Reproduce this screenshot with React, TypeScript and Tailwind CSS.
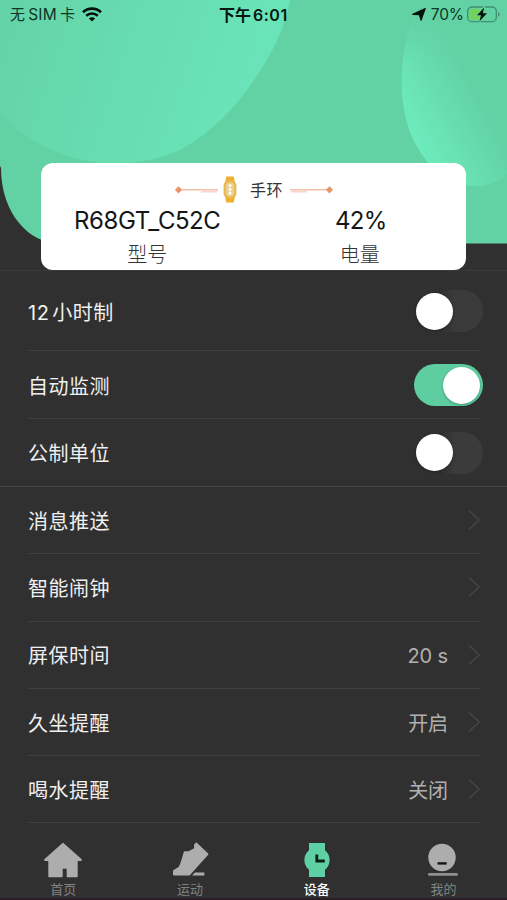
import { ReactNode, useState } from "react";

interface SwitchItem {
    id: number;
    label: ReactNode;
    on: boolean;
}

interface LinkItem {
    label: string;
    value?: string;
}

const links: LinkItem[] = [
    { label: "消息推送" },
    { label: "智能闹钟" },
    { label: "屏保时间", value: "20 s" },
    { label: "久坐提醒", value: "开启" },
    { label: "喝水提醒", value: "关闭" },
];

function StatusBar() {
    return (
        <div className="relative flex h-[30px] items-center justify-between pl-[10px] pr-[7px] text-[15px] text-[#0d3527]">
            <div className="flex items-center">
                <span className="tracking-[0.2px]">无<span className="mx-[3px] text-[15.5px]">SIM</span>卡</span>
                <svg className="mb-px ml-[7px]" width="20" height="15" viewBox="0 0 20 15">
                    <path d="M1 5.2A13 13 0 0 1 19 5.2" fill="none" stroke="#04120c" strokeWidth="2.6" />
                    <path d="M4.2 8.8A8.4 8.4 0 0 1 15.8 8.8" fill="none" stroke="#04120c" strokeWidth="2.6" />
                    <path d="M10 14.6L6.9 11.5A4.4 4.4 0 0 1 13.1 11.5Z" fill="#04120c" />
                </svg>
            </div>
            <div className="absolute left-[219px] top-[4px] text-[16px] font-semibold leading-[22px] whitespace-nowrap text-[#06170f]">
                下午<span className="ml-[2px] tracking-[0.5px]">6:01</span>
            </div>
            <div className="flex items-center">
                <svg className="mb-[2px]" width="14" height="13" viewBox="0 0 14 13">
                    <path d="M13.2 0.6L9 12.2L7.4 6.6L0.8 6.4Z" fill="#04120c" stroke="#04120c" strokeWidth="1.2" strokeLinejoin="round" />
                </svg>
                <span className="ml-[5px] text-[15.5px] tracking-[-0.1px]">70%</span>
                <svg className="mb-px ml-[3px]" width="33" height="17" viewBox="0 0 33 17">
                    <rect x="0.7" y="1" width="28.6" height="14.6" rx="4.2" fill="none" stroke="#3f8f70" strokeWidth="1.3" />
                    <rect x="2.6" y="3" width="16.4" height="10.6" rx="2.4" fill="#72d457" />
                    <path d="M31 6v5c2-1 2-4 0-5Z" fill="#3f8f70" />
                    <path d="M17.2 1.4L10 9.2H14L12.4 15.6L20 7.2H15.8Z" fill="#04120c" stroke="#62d2a5" strokeWidth="2" paintOrder="stroke" />
                </svg>
            </div>
        </div>
    );
}

function HeaderArt() {
    return (
        <svg className="absolute left-0 top-0" width="507" height="244" viewBox="0 0 507 244">
            <defs>
                <linearGradient id="bigCircle" x1="0" y1="40" x2="240" y2="120" gradientUnits="userSpaceOnUse">
                    <stop offset="0" stopColor="#64d4a8" />
                    <stop offset="1" stopColor="#69e4b8" />
                </linearGradient>
                <linearGradient id="sideBlob" x1="408" y1="138" x2="480" y2="100" gradientUnits="userSpaceOnUse">
                    <stop offset="0" stopColor="#6eedbe" />
                    <stop offset="1" stopColor="#62d2a5" />
                </linearGradient>
                <linearGradient id="sideBlobTop" x1="0" y1="10" x2="0" y2="60" gradientUnits="userSpaceOnUse">
                    <stop offset="0" stopColor="#62d2a5" />
                    <stop offset="1" stopColor="#62d2a5" stopOpacity="0" />
                </linearGradient>
            </defs>
            <path d="M0 0H507V243.5H60C30 244 1 214 1 168L0 166Z" fill="#62d2a5" />
            <path d="M0 0H290C285 28 272 54 254 80C235 108 212 132 182 149C142 168 92 168 52 150C31 140 14 129 0 113Z" fill="url(#bigCircle)" />
            <path d="M420 0C404 32 399 74 403 103C407 129 414 145 427 161C440 178 458 186 475 186C488 186 499 182 507 174V0Z" fill="url(#sideBlob)" />
            <path d="M398 0H507V60H398Z" fill="url(#sideBlobTop)" />
        </svg>
    );
}

function Ornament({ flip }: { flip?: boolean }) {
    return (
        <svg className={flip ? "-scale-x-100" : ""} width="43" height="8" viewBox="0 0 43 8">
            <path d="M3 3.8H43" stroke="#f3c0a9" strokeWidth="1.4" />
            <path d="M26 5.8H42" stroke="#f6cfc0" strokeWidth="1.3" />
            <path d="M3.5 0.4L6.9 3.8L3.5 7.2L0.1 3.8Z" fill="#e89468" stroke="#e89468" strokeWidth="0.4" />
        </svg>
    );
}

function DeviceCard() {
    return (
        <div className="mx-[41px] mt-[133px] h-[107px] rounded-[12px] bg-white">
            <div className="flex h-[54px] items-center pl-[134px]">
                <Ornament />
                <svg className="mb-[2px] ml-[5px]" width="14" height="27" viewBox="0 0 14 27">
                    <path d="M3.2 0.5H10.8L11.8 6H2.2Z" fill="#efb02e" />
                    <path d="M2.2 21H11.8L10.8 26.5H3.2Z" fill="#efb02e" />
                    <rect x="0.6" y="4.2" width="12.8" height="18.4" rx="5.2" fill="#edb849" />
                    <rect x="2.8" y="6.2" width="8.4" height="14.4" rx="4" fill="#e6cf98" />
                    <circle cx="7" cy="9.6" r="1.6" fill="#fff8e6" />
                    <circle cx="7" cy="13.4" r="1.6" fill="#fff8e6" />
                    <circle cx="7" cy="17.2" r="1.6" fill="#fff8e6" />
                </svg>
                <span className="ml-[13px] mr-[7px] text-[16px] leading-[24px] tracking-[0.4px] text-[#333]">手环</span>
                <Ornament flip />
            </div>
            <div className="-mt-[14px] grid grid-cols-2 text-center">
                <div>
                    <div className="text-[24px] leading-[36px] tracking-[-0.45px] text-[#161616]">R68GT_C52C</div>
                    <div className="pt-px text-[20px] font-light leading-[30px] text-[#333]">型号</div>
                </div>
                <div>
                    <div className="pl-[2px] text-[24px] leading-[36px] tracking-[-0.8px] text-[#161616]">42%</div>
                    <div className="pt-px text-[20px] font-light leading-[30px] text-[#333]">电量</div>
                </div>
            </div>
        </div>
    );
}

function Toggle({ on, onClick }: { on: boolean; onClick: () => void }) {
    return (
        <button
            onClick={onClick}
            className={`flex h-[42px] w-[69px] items-center rounded-full ${on ? "justify-end bg-[#5ecda0] pr-[3px]" : "justify-start bg-gradient-to-r from-[#303030] from-40% to-[#3b3b3b] to-60% pl-[2px]"}`}
        >
            <span className="size-[37px] rounded-full bg-white shadow-[0_1px_3px_rgba(0,0,0,0.25)]"></span>
        </button>
    );
}

function Tab({ label, active, children }: { label: string; active?: boolean; children: ReactNode }) {
    return (
        <div className="flex flex-1 flex-col items-center">
            <div className="flex h-[38px] items-center">{children}</div>
            <span className={`pt-px text-[13px] leading-[18px] ${active ? "font-medium text-white" : "text-[#828282]"}`}>{label}</span>
        </div>
    );
}

export default function App() {
    const [switches, setSwitches] = useState<SwitchItem[]>([
        { id: 1, label: <>12<span className="ml-[3px]">小时制</span></>, on: false },
        { id: 2, label: "自动监测", on: true },
        { id: 3, label: "公制单位", on: false },
    ]);

    const toggle = (id: number) => {
        setSwitches(switches.map((item) => (item.id === id ? { ...item, on: !item.on } : item)));
    };

    return (
        <div className="flex h-[900px] w-[507px] flex-col overflow-hidden bg-[#303030] font-['Inter','Noto_Sans_CJK_SC',sans-serif]">
            <header className="relative h-[271px] shrink-0 border-b border-[#3b3b3b]">
                <HeaderArt />
                <div className="relative">
                    <StatusBar />
                    <DeviceCard />
                </div>
            </header>

            {/* Switches */}
            <div className="shrink-0 border-b border-[#444] pl-[28px] pr-[24px]">
                {switches.map((item, i) => (
                    <div
                        key={item.id}
                        className={`relative flex items-center justify-between ${i === 0 ? "h-[80px]" : i === 1 ? "h-[68px]" : "h-[67px]"}`}
                    >
                        <span className="pt-[3px] text-[20px] tracking-[0.5px] text-[#f0f0f0]">{item.label}</span>
                        <Toggle on={item.on} onClick={() => toggle(item.id)} />
                        {i < 2 && <div className="absolute bottom-0 left-0 right-[3px] h-px bg-[#414141]"></div>}
                    </div>
                ))}
            </div>

            {/* Links */}
            <div className="shrink-0 pl-[28px] pr-[27px]">
                {links.map((item) => (
                    <div key={item.label} className="flex h-[67.3px] items-center border-b border-[#414141]">
                        <span className="flex-1 pt-[3px] text-[20px] tracking-[0.5px] text-[#f0f0f0]">{item.label}</span>
                        <span className="mr-[20px] pt-[3px] text-[20px] tracking-[-0.1px] text-[#b0b0b0]">{item.value}</span>
                        <svg width="12" height="22" viewBox="0 0 12 22">
                            <path d="M1 1.5L11 11L1 20.5" fill="none" stroke="#454545" strokeWidth="1.6" />
                        </svg>
                    </div>
                ))}
            </div>

            <nav className="flex flex-1 pt-[18px]">
                <Tab label="首页">
                    <svg width="38" height="36" viewBox="0 0 38 36">
                        <path d="M19 1.4L37 17.4V18.4H33V34.6H23.4V26H18V34.6H5V18.4H1V17.4Z" fill="#adadad" stroke="#adadad" strokeWidth="1.4" strokeLinejoin="round" />
                    </svg>
                </Tab>
                <Tab label="运动">
                    <svg width="38" height="36" viewBox="0 0 38 36">
                        <path d="M25.3 1.4L36.6 12.2L18.2 32.6H2.8V29L8.4 25.4C10.8 21 12 15.5 13.6 10H18L24 6.6L23.8 3Z" fill="#adadad" stroke="#adadad" strokeWidth="1.6" strokeLinejoin="round" />
                        <path d="M24 30.4H33.4V33.4H21Z" fill="#adadad" />
                    </svg>
                </Tab>
                <Tab label="设备" active>
                    <svg width="26" height="34" viewBox="0 0 26 34">
                        <path d="M5 0H21V7.2A12.7 12.7 0 0 1 21 26.8V34H5V26.8A12.7 12.7 0 0 1 5 7.2Z" fill="#5fd0a3" />
                        <path d="M12.8 11.5V18H20.8" fill="none" stroke="#0d1e17" strokeWidth="2.8" />
                    </svg>
                </Tab>
                <Tab label="我的">
                    <svg className="mr-[2px]" width="30" height="34" viewBox="0 0 30 34">
                        <circle cx="14" cy="14.5" r="13.7" fill="#adadad" />
                        <path d="M9.5 20.4H18.7" stroke="#151515" strokeWidth="2.4" />
                        <path d="M1.3 31.4H28.7" stroke="#909090" strokeWidth="2.6" strokeLinecap="round" />
                    </svg>
                </Tab>
            </nav>
            <div className="h-[2px] shrink-0 bg-[#2a1e25]"></div>
        </div>
    );
}
